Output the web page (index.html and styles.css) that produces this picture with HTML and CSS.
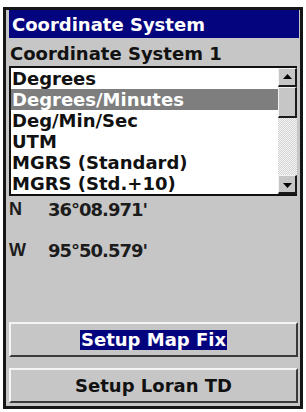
FILE: index.html
```html
<!DOCTYPE html>
<html lang="en">
<head>
    <meta charset="UTF-8">
    <meta name="viewport" content="width=device-width, initial-scale=1.0">
    <title>Coordinate System</title>
    <link rel="stylesheet" href="styles.css">
</head>
<body>

    <div class="screen">
        <div class="title">Coordinate System</div>
        <div class="subtitle">Coordinate System 1</div>

        <div class="list">
            <ul class="items">
                <li>Degrees</li>
                <li class="selected">Degrees/Minutes</li>
                <li>Deg/Min/Sec</li>
                <li>UTM</li>
                <li>MGRS (Standard)</li>
                <li>MGRS (Std.+10)</li>
            </ul>
            <div class="scrollbar">
                <div class="arrow up">
                    <svg width="9" height="5" viewBox="0 0 9 5"><polygon points="0,5 9,5 4.5,0" fill="#000"/></svg>
                </div>
                <div class="thumb"></div>
                <div class="track"></div>
                <div class="arrow down">
                    <svg width="9" height="5" viewBox="0 0 9 5"><polygon points="0,0 9,0 4.5,5" fill="#000"/></svg>
                </div>
            </div>
        </div>

        <div class="coord first">
            <span class="label">N</span>
            <span class="value">36&deg;08.971'</span>
        </div>
        <div class="coord">
            <span class="label">W</span>
            <span class="value">95&deg;50.579'</span>
        </div>

        <div class="buttons">
            <button class="btn"><span class="focus">Setup Map Fix</span></button>
            <button class="btn">Setup Loran TD</button>
        </div>
    </div>

</body>
</html>
```

FILE: styles.css
```css
body {
    margin: 0;
    background-color: #ffffff;
    font-family: 'DejaVu Sans', sans-serif;
    font-weight: bold;
    font-size: 18px;
    color: #111111;
}

.screen {
    box-sizing: border-box;
    width: 300px;
    height: 402px;
    margin: 7px 0 0 3px;
    border: 3px solid #161616;
    background-color: #c6c6c6;
    padding: 0 3px 3px 3px;
    display: flex;
    flex-direction: column;
}

.title {
    height: 28px;
    box-sizing: border-box;
    padding: 2px 0 0 3px;
    line-height: 26px;
    margin-right: -2px;
    background-color: #04047e;
    color: #ffffff;
}

.subtitle {
    margin-top: 4px;
    padding-left: 1px;
    line-height: 24px;
}

/* List box */
.list {
    display: flex;
    background-color: #ffffff;
    border: 2px solid #111111;
    border-right: none;
}

.items {
    flex-grow: 1;
    list-style-type: none;
    margin: 0;
    padding: 0;
}

.items li {
    height: 21px;
    line-height: 21px;
    padding-left: 1px;
    white-space: nowrap;
}

.items .selected {
    background-color: #7e7e7e;
    color: #ffffff;
}

.scrollbar {
    width: 19px;
    display: flex;
    flex-direction: column;
}

.arrow,
.thumb {
    box-sizing: border-box;
    background-color: #c6c6c6;
    border-top: 1px solid #f2f2f2;
    border-left: 1px solid #f2f2f2;
    border-right: 2px solid #1a1a1a;
    border-bottom: 2px solid #1a1a1a;
}

.arrow {
    height: 19px;
    display: flex;
    justify-content: center;
}

.arrow svg {
    display: block;
}

.arrow.up {
    align-items: flex-start;
    padding-top: 5px;
}

.arrow.down {
    align-items: flex-end;
    padding-bottom: 4px;
}

.thumb {
    height: 31px;
}

.track {
    height: 57px;
    background-color: #f4f4f4;
    background-image: conic-gradient(#d4d4d4 25%, transparent 0 50%, #d4d4d4 0 75%, transparent 0);
    background-size: 2px 2px;
}

/* Position rows */
.coord {
    display: flex;
    line-height: 21px;
    margin-top: 20px;
    color: #1c1c1c;
}

.coord.first {
    margin-top: 3px;
}

.coord .label {
    width: 39px;
    font-family: 'Liberation Sans', sans-serif;
}

.coord .value {
    letter-spacing: -1px;
}

/* Bottom buttons */
.buttons {
    margin-top: auto;
    display: flex;
    flex-direction: column;
    gap: 11px;
    margin-right: -1px;
}

.btn {
    height: 35px;
    box-sizing: border-box;
    background-color: #c6c6c6;
    border-top: 2px solid #f4f4f4;
    border-left: 2px solid #f4f4f4;
    border-right: 2px solid #3a3a3a;
    border-bottom: 2px solid #3a3a3a;
    font-family: 'DejaVu Sans', sans-serif;
    font-weight: bold;
    font-size: 18px;
    color: #111111;
    padding: 0;
    cursor: pointer;
}

.btn .focus {
    display: inline-block;
    line-height: 20px;
    padding: 0 1px;
    background-color: #04047e;
    color: #ffffff;
}
```
